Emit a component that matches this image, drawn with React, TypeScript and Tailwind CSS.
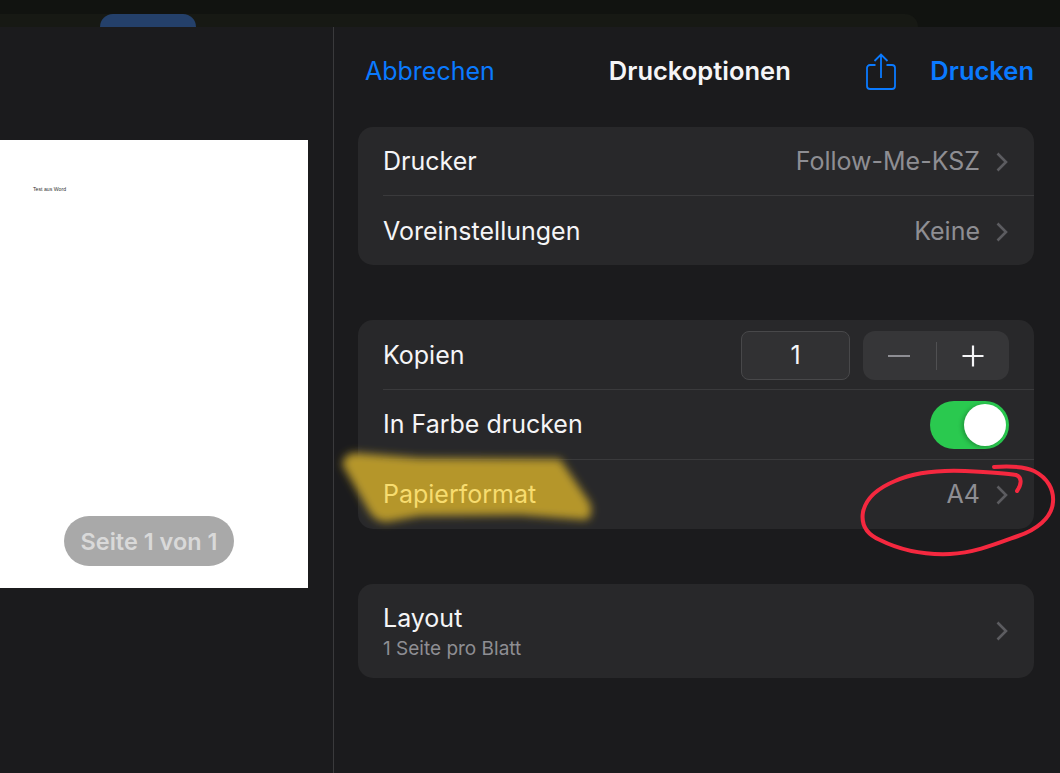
const Chevron = () => (
  <svg width="12" height="20" viewBox="0 0 12 20" fill="none" className="shrink-0">
    <path d="M1.5 1.5L10 10L1.5 18.5" stroke="#5c5c60" strokeWidth="2.6" />
  </svg>
)

const ShareIcon = () => (
  <svg width="32" height="38" viewBox="0 0 32 38" fill="none" stroke="#0a7aff" strokeWidth="1.8" className="shrink-0">
    <path d="M10.5 12H5a3 3 0 0 0-3 3v18a3 3 0 0 0 3 3h22a3 3 0 0 0 3-3V15a3 3 0 0 0-3-3h-5.500" />
    <path d="M16 25V2M9.500 8L16 1.500L22.500 8" />
  </svg>
)

const Row = ({ label, value, last }: { label: string; value?: string; last?: boolean }) => (
  <div className={`ml-[25px] pr-[26px] h-[69px] pt-[2px] flex items-center justify-between ${last ? "" : "border-b border-[#3a3a3c]"}`}>
    <span className="text-[25px] text-[#f5f5f7]">{label}</span>
    <span className="flex items-center gap-[16px] text-[25px] text-[#8e8e93]">
      {value}
      <Chevron />
    </span>
  </div>
)

export default function App() {
  return (
    <div className="relative w-[1060px] h-[773px] overflow-hidden bg-[#111310] font-['Inter',sans-serif]">
      <div className="h-[27px] pt-[14px]">
        <div className="w-[918px] h-[13px] rounded-tr-[16px] bg-[#171914]">
          <div className="ml-[100px] w-[96px] h-[13px] rounded-t-[18px] bg-[#24406a]" />
        </div>
      </div>

      <div className="flex h-[746px] bg-[#1b1b1d]">
        <div className="w-[333px] pt-[113px] border-r border-[#3a3a3c] box-content">
          <div className="relative w-[308px] h-[448px] bg-white pt-[45px] pl-[33px]">
            <p className="text-[5.200px] leading-[8px] text-[#333] font-['Liberation_Sans',sans-serif]">Test aus Word</p>
            <div className="absolute left-[64px] top-[376px] w-[170px] h-[50px] pt-[2px] rounded-full bg-[#a9a9a9] flex items-center justify-center text-[23.500px] font-semibold text-[#d9d9d9]">
              Seite 1 von 1
            </div>
          </div>
        </div>

        <div className="flex-1 pl-[24px] pr-[26px]">
          <div className="h-[100px] flex items-center pb-[10px]">
            <span className="ml-[7px] text-[25px] text-[#0a7aff]">Abbrechen</span>
            <span className="ml-[114px] -mt-[2px] text-[25.500px] font-semibold text-[#f5f5f7]">Druckoptionen</span>
            <div className="ml-auto flex items-center gap-[33px]">
              <ShareIcon />
              <span className="-mt-[2px] text-[25.500px] font-semibold text-[#0a7aff]">Drucken</span>
            </div>
          </div>

          <div className="flex flex-col gap-[55px]">
            <div className="rounded-[15px] bg-[#28282a]">
              <Row label="Drucker" value="Follow-Me-KSZ" />
              <Row label="Voreinstellungen" value="Keine" last />
            </div>

            <div className="rounded-[15px] bg-[#28282a]">
              <div className="ml-[25px] pr-[25px] h-[70px] pt-[2px] flex items-center justify-between border-b border-[#3a3a3c]">
                <span className="text-[25px] text-[#f5f5f7]">Kopien</span>
                <div className="flex items-center gap-[13px]">
                  <div className="w-[109px] h-[49px] rounded-[8px] border border-[#48484a] bg-[#313133] flex items-center justify-center text-[25px] text-[#f5f5f7]">
                    1
                  </div>
                  <div className="w-[146px] h-[49px] rounded-[12px] bg-[#363638] flex items-center">
                    <div className="flex-1 flex justify-center">
                      <span className="w-[22px] h-[2px] bg-[#8e8e93]" />
                    </div>
                    <span className="w-px h-[28px] bg-[#505052]" />
                    <div className="flex-1 flex justify-center">
                      <svg width="24" height="24" viewBox="0 0 24 24" stroke="#f5f5f7" strokeWidth="2.200">
                        <path d="M12 1.500V22.500M1.500 12H22.500" />
                      </svg>
                    </div>
                  </div>
                </div>
              </div>
              <div className="ml-[25px] pr-[25px] h-[70px] flex items-center justify-between border-b border-[#3a3a3c]">
                <span className="text-[25px] text-[#f5f5f7]">In Farbe drucken</span>
                <div className="w-[79px] h-[48px] rounded-full bg-[#2ac94f] flex items-center justify-end pr-[3px]">
                  <span className="w-[42px] h-[42px] rounded-full bg-white shadow-[-2px_1px_4px_rgba(0,0,0,0.25)]" />
                </div>
              </div>
              <div className="ml-[25px] pr-[26px] h-[69px] flex items-center justify-between">
                <span className="relative z-10 text-[25px] text-[#f7dc6f]">Papierformat</span>
                <span className="flex items-center gap-[16px] text-[25px] text-[#8e8e93]">
                  A4
                  <Chevron />
                </span>
              </div>
            </div>

            <div className="rounded-[15px] bg-[#28282a] h-[94px] pl-[25px] pr-[26px] flex items-center justify-between">
              <div className="flex flex-col pt-[2px]">
                <span className="text-[25px] leading-[30px] text-[#f5f5f7]">Layout</span>
                <span className="mt-[3px] text-[19px] leading-[26px] text-[#8e8e93]">1 Seite pro Blatt</span>
              </div>
              <Chevron />
            </div>
          </div>
        </div>
      </div>

      {/* markup drawn on top of the screenshot */}
      <svg className="absolute inset-0 pointer-events-none" width="1060" height="773" viewBox="0 0 1060 773" fill="none">
        <defs>
          <filter id="marker" x="-10%" y="-30%" width="120%" height="160%">
            <feGaussianBlur stdDeviation="4" />
          </filter>
        </defs>
        <path
          d="M342 464Q346 452 356 453L420 458L560 459L590 503Q594 516 586 520L520 515L420 516L387 522Q376 522 370 513Z"
          fill="#b5962c"
          filter="url(#marker)"
        />
        <path
          d="M994 467C1010 466 1024 466 1034 471C1048 478 1054 490 1053 502C1052 518 1036 530 1018 536C996 544 974 553 950 554C925 555 900 550 880 540C866 534 861 524 863 512C866 498 878 488 895 481C915 472 940 470 965 471C985 472 1005 473 1016 475C1022 477 1022 484 1017 491"
          stroke="#f5283f"
          strokeWidth="4"
          strokeLinecap="round"
        />
      </svg>
    </div>
  )
}
